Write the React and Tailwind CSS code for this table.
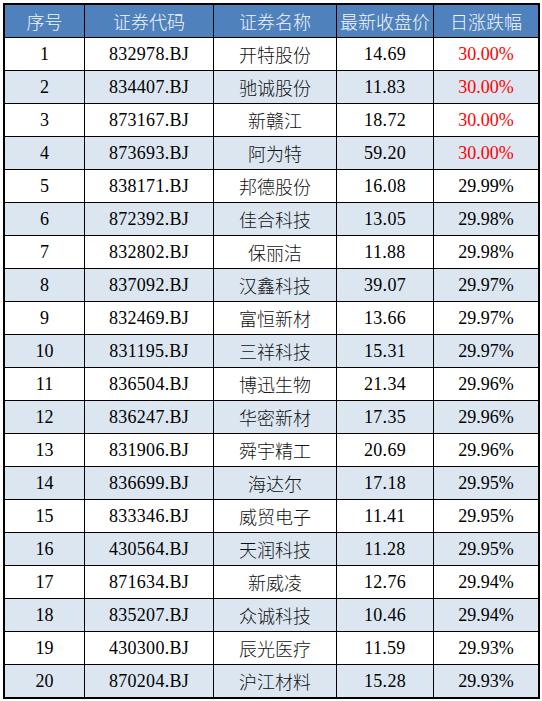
import React from 'react';

// 北交所涨幅榜
const rows = [
  ['1', '832978.BJ', '开特股份', '14.69', '30.00%'],
  ['2', '834407.BJ', '驰诚股份', '11.83', '30.00%'],
  ['3', '873167.BJ', '新赣江', '18.72', '30.00%'],
  ['4', '873693.BJ', '阿为特', '59.20', '30.00%'],
  ['5', '838171.BJ', '邦德股份', '16.08', '29.99%'],
  ['6', '872392.BJ', '佳合科技', '13.05', '29.98%'],
  ['7', '832802.BJ', '保丽洁', '11.88', '29.98%'],
  ['8', '837092.BJ', '汉鑫科技', '39.07', '29.97%'],
  ['9', '832469.BJ', '富恒新材', '13.66', '29.97%'],
  ['10', '831195.BJ', '三祥科技', '15.31', '29.97%'],
  ['11', '836504.BJ', '博迅生物', '21.34', '29.96%'],
  ['12', '836247.BJ', '华密新材', '17.35', '29.96%'],
  ['13', '831906.BJ', '舜宇精工', '20.69', '29.96%'],
  ['14', '836699.BJ', '海达尔', '17.18', '29.95%'],
  ['15', '833346.BJ', '威贸电子', '11.41', '29.95%'],
  ['16', '430564.BJ', '天润科技', '11.28', '29.95%'],
  ['17', '871634.BJ', '新威凌', '12.76', '29.94%'],
  ['18', '835207.BJ', '众诚科技', '10.46', '29.94%'],
  ['19', '430300.BJ', '辰光医疗', '11.59', '29.93%'],
  ['20', '870204.BJ', '沪江材料', '15.28', '29.93%'],
];

const headers = ['序号', '证券代码', '证券名称', '最新收盘价', '日涨跌幅'];

const num = "font-['Liberation_Serif',serif] text-[18px]";
const cjk = "font-['Noto_Sans_CJK_SC',sans-serif] text-[18px] font-light";

export default function App() {
  return (
    <div className="w-[542px] h-[701px] bg-white pt-[3px] pl-[3px]">
      <div className="w-[537px] bg-black p-[2px] grid grid-cols-[79px_128px_122px_96px_104px] auto-rows-[32px] gap-px">
        {headers.map((h) => (
          <div key={h} className={`bg-[#4f81bd] text-[#f2f5fa] flex items-center justify-center ${cjk}`}>
            {h}
          </div>
        ))}
        {rows.map((r, i) => {
          const bg = i % 2 === 1 ? 'bg-[#dce6f1]' : 'bg-white';
          const red = i < 4;
          return (
            <React.Fragment key={r[0]}>
              <div className={`${bg} flex items-center justify-center text-black ${num}`}>{r[0]}</div>
              <div className={`${bg} flex items-center justify-center text-black tracking-[0.3px] ${num}`}>{r[1]}</div>
              <div className={`${bg} flex items-center justify-center text-[#111] ${cjk}`}>{r[2]}</div>
              <div className={`${bg} flex items-center justify-center text-black tracking-[0.3px] ${num}`}>{r[3]}</div>
              <div className={`${bg} flex items-center justify-center ${red ? 'text-[#ff0000]' : 'text-black'} ${num}`}>{r[4]}</div>
            </React.Fragment>
          );
        })}
      </div>
    </div>
  );
}
